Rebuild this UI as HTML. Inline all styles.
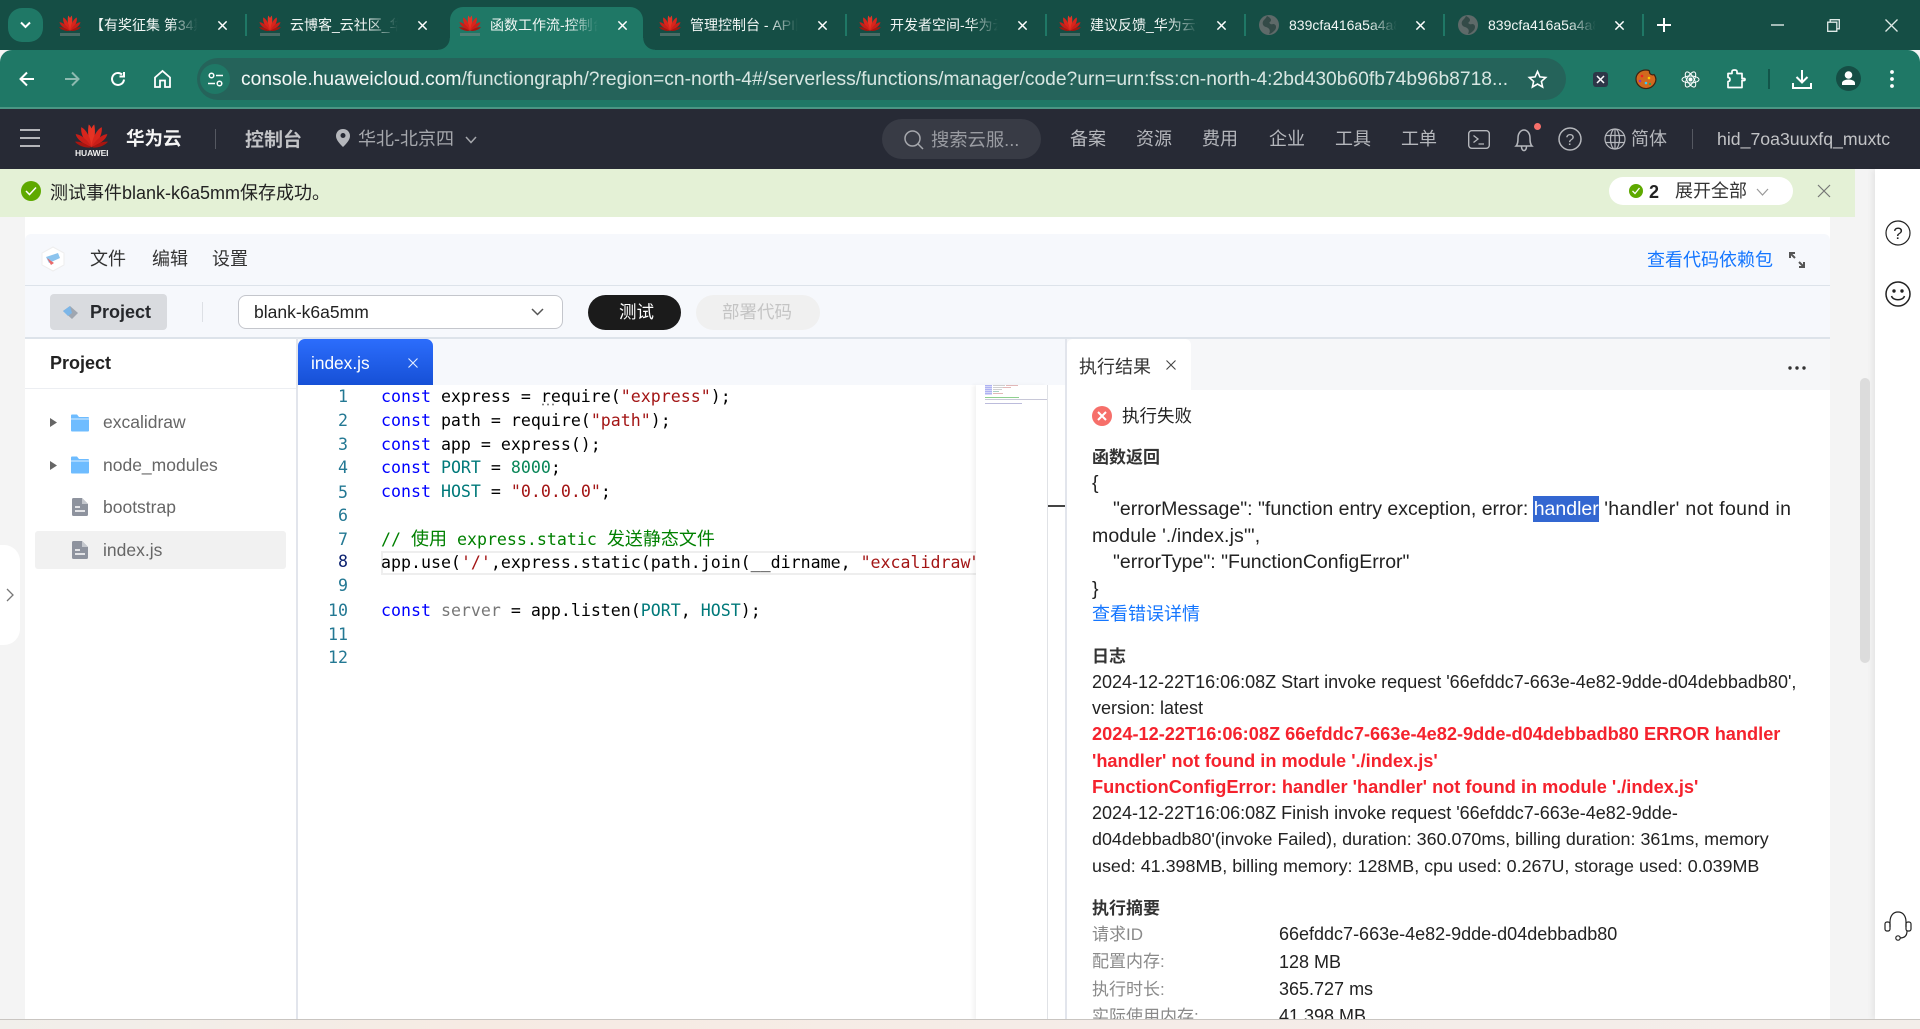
<!DOCTYPE html>
<html lang="zh"><head><meta charset="utf-8"><title>函数工作流-控制台</title>
<style>
html,body{margin:0;padding:0;width:1920px;height:1029px;overflow:hidden;background:#f4f4f4;font-family:"Liberation Sans","Noto Sans CJK SC",sans-serif;color:#222}
.b{position:absolute}
.t{position:absolute;white-space:nowrap;line-height:0;height:0}
svg{position:absolute;overflow:visible}
.tab{position:absolute;top:15px;height:20px;line-height:20px;font-size:14px;color:#f2f7f5;white-space:nowrap;overflow:hidden;width:110px;-webkit-mask-image:linear-gradient(90deg,#000 72%,transparent 98%);mask-image:linear-gradient(90deg,#000 72%,transparent 98%)}
.sep{position:absolute;top:14px;width:2px;height:22px;background:#1f7866}
.nav{font-size:18px;color:#b5b7bc}
.code{font-family:"DejaVu Sans Mono","Noto Sans CJK SC",monospace;font-size:16.6px;color:#000}
.ln{font-family:"DejaVu Sans Mono",monospace;font-size:16.6px;color:#237893;width:60px;text-align:right;left:288px}
.k{color:#00f}.s{color:#a31515}.n{color:#098658}.u{color:#777}
.r{font-size:18px;color:#222;left:1092px}
.j{font-size:19.5px;color:#222;left:1092px}
.h{font-size:17px;font-weight:bold;color:#333;left:1092px}
.e{font-size:18.2px;color:#f5222d;font-weight:bold;left:1092px}
.l{font-size:17px;color:#8a8a8a;left:1092px}
.w{font-size:18px;color:#222;left:1279px}
.f{font-size:17.5px;color:#666;left:103px}
</style></head><body>
<svg width="0" height="0" style="position:absolute"><defs>
<symbol id="hw" viewBox="0 0 48 36">
<g>
<path d="M24 35C19 26 18 11 20 2C26 6 29 24 24 35Z" fill="#e63324"/>
<path d="M24 35C19 26 18 11 20 2C26 6 29 24 24 35Z" transform="scale(-1 1) translate(-48 0)" fill="#e63324"/>
<path d="M24 35C15 28 8 18 9 6C16 8 24 24 24 35Z" fill="#d8251c"/>
<path d="M24 35C33 28 40 18 39 6C32 8 24 24 24 35Z" fill="#d8251c"/>
<path d="M24 35C14 31 3 25 1 16C9 16 20 27 24 35Z" fill="#c81e18"/>
<path d="M24 35C34 31 45 25 47 16C39 16 28 27 24 35Z" fill="#c81e18"/>
<path d="M23 35.5C14 36 5 33 0 27C8 26 18 31 23 35.5Z" fill="#a81510"/>
<path d="M25 35.5C34 36 43 33 48 27C40 26 30 31 25 35.5Z" fill="#a81510"/>
</g></symbol>
<symbol id="gl" viewBox="0 0 20 20"><circle cx="10" cy="10" r="10" fill="#5e6a69"/><path d="M8 1C12 3 13 5 11 7C9 8 12 10 14 9C17 9 18 12 16 15C14 17 12 19 10 19C12 15 10 13 7 12C3 11 3 7 5 5C6 4 7 3 8 1Z" fill="#334a47"/></symbol>
<symbol id="xx" viewBox="0 0 12 12"><path d="M1.500 1.500L10.500 10.500M10.500 1.500L1.500 10.500" fill="none" stroke="currentColor" stroke-width="1.600"/></symbol>
<symbol id="fo" viewBox="0 0 18 18"><path d="M0 1.500Q0 .5 1 .5H6L8 3H17Q18 3 18 4V16.500Q18 17.500 17 17.500H1Q0 17.500 0 16.500Z" fill="#6ebcff"/><path d="M0 5H18" stroke="#fff" stroke-width=".7"/></symbol>
<symbol id="fi" viewBox="0 0 16 18"><path d="M1.500 0H10L16 6V16.500Q16 18 14.500 18H1.500Q0 18 0 16.500V1.500Q0 0 1.500 0Z" fill="#8e939e"/><path d="M3 9H8M3 13H13" stroke="#fff" stroke-width="1.600"/><path d="M10 0V6H16" fill="#c5c8ce"/></symbol>
</defs></svg>

<!-- tab strip -->
<div class="b" style="left:0;top:0;width:1920px;height:50px;background:#154e45"></div>
<div class="b" style="left:8px;top:8px;width:35px;height:34px;background:#1f7866;border-radius:14px"></div>
<svg style="left:20px;top:21px" width="11" height="8"><path d="M1 1.500L5.500 6L10 1.500" fill="none" stroke="#fff" stroke-width="2"/></svg>
<div class="b" style="left:450px;top:7px;width:193px;height:43px;background:#1f7866;border-radius:13px 13px 0 0"></div>
<div class="b" style="left:438px;top:38px;width:12px;height:12px;background:radial-gradient(circle at 0 0,#154e45 11.5px,#1f7866 12px)"></div>
<div class="b" style="left:643px;top:38px;width:12px;height:12px;background:radial-gradient(circle at 100% 0,#154e45 11.5px,#1f7866 12px)"></div>

<svg style="left:59px;top:14px" width="22" height="18"><use href="#hw" width="22" height="18"/></svg>
<svg style="left:259px;top:14px" width="22" height="18"><use href="#hw" width="22" height="18"/></svg>
<svg style="left:459px;top:14px" width="22" height="18"><use href="#hw" width="22" height="18"/></svg>
<svg style="left:659px;top:14px" width="22" height="18"><use href="#hw" width="22" height="18"/></svg>
<svg style="left:859px;top:14px" width="22" height="18"><use href="#hw" width="22" height="18"/></svg>
<svg style="left:1059px;top:14px" width="22" height="18"><use href="#hw" width="22" height="18"/></svg>
<svg style="left:1259px;top:15px" width="20" height="20"><use href="#gl" width="20" height="20"/></svg>
<svg style="left:1458px;top:15px" width="20" height="20"><use href="#gl" width="20" height="20"/></svg>
<div class="b" style="left:60px;top:33px;width:20px;height:3px;background:#7d8a88;opacity:.5"></div>
<div class="b" style="left:260px;top:33px;width:20px;height:3px;background:#7d8a88;opacity:.5"></div>
<div class="b" style="left:460px;top:33px;width:20px;height:3px;background:#7d8a88;opacity:.5"></div>
<div class="b" style="left:660px;top:33px;width:20px;height:3px;background:#7d8a88;opacity:.5"></div>
<div class="b" style="left:860px;top:33px;width:20px;height:3px;background:#7d8a88;opacity:.5"></div>
<div class="b" style="left:1060px;top:33px;width:20px;height:3px;background:#7d8a88;opacity:.5"></div>

<div class="tab" style="left:90px">【有奖征集 第34期】</div>
<div class="tab" style="left:290px">云博客_云社区_华为云</div>
<div class="tab" style="left:490px">函数工作流-控制台</div>
<div class="tab" style="left:690px">管理控制台 - API网关</div>
<div class="tab" style="left:890px">开发者空间-华为云开发</div>
<div class="tab" style="left:1090px">建议反馈_华为云论坛</div>
<div class="tab" style="left:1289px">839cfa416a5a4a8fb7</div>
<div class="tab" style="left:1488px">839cfa416a5a4a8fb7</div>

<svg style="left:217px;top:20px;color:#fff" width="11" height="11"><use href="#xx" width="11" height="11"/></svg>
<svg style="left:417px;top:20px;color:#fff" width="11" height="11"><use href="#xx" width="11" height="11"/></svg>
<svg style="left:617px;top:20px;color:#fff" width="11" height="11"><use href="#xx" width="11" height="11"/></svg>
<svg style="left:817px;top:20px;color:#fff" width="11" height="11"><use href="#xx" width="11" height="11"/></svg>
<svg style="left:1017px;top:20px;color:#fff" width="11" height="11"><use href="#xx" width="11" height="11"/></svg>
<svg style="left:1216px;top:20px;color:#fff" width="11" height="11"><use href="#xx" width="11" height="11"/></svg>
<svg style="left:1415px;top:20px;color:#fff" width="11" height="11"><use href="#xx" width="11" height="11"/></svg>
<svg style="left:1614px;top:20px;color:#fff" width="11" height="11"><use href="#xx" width="11" height="11"/></svg>

<div class="sep" style="left:245px"></div><div class="sep" style="left:845px"></div><div class="sep" style="left:1045px"></div><div class="sep" style="left:1244px"></div><div class="sep" style="left:1443px"></div><div class="sep" style="left:1642px"></div>
<svg style="left:1657px;top:18px" width="14" height="14"><path d="M7 0V14M0 7H14" stroke="#fff" stroke-width="2"/></svg>
<svg style="left:1771px;top:24px" width="13" height="2"><path d="M0 1H13" stroke="#dfeae7" stroke-width="1.400"/></svg>
<svg style="left:1827px;top:19px" width="13" height="13"><path d="M.7 3.200H9.800V12.300H.7ZM3.200 3V.7H12.300V9.800H10" fill="none" stroke="#dfeae7" stroke-width="1.300"/></svg>
<svg style="left:1885px;top:19px" width="13" height="13"><path d="M.5.5L12.500 12.500M12.500.5L.5 12.500" stroke="#dfeae7" stroke-width="1.300"/></svg>

<!-- toolbar -->
<div class="b" style="left:0;top:50px;width:1920px;height:58px;background:#1f7866;border-radius:12px 12px 0 0"></div>
<div class="b" style="left:0;top:107px;width:1920px;height:2px;background:#4a9684"></div>
<svg style="left:19px;top:71px" width="16" height="16"><path d="M15 8H2M8 1.500L1.500 8L8 14.500" fill="none" stroke="#fff" stroke-width="2"/></svg>
<svg style="left:64px;top:71px" width="16" height="16"><path d="M1 8H14M8 1.500L14.500 8L8 14.500" fill="none" stroke="#8dbab0" stroke-width="2"/></svg>
<svg style="left:110px;top:71px" width="16" height="16"><path d="M14 8.500A6 6 0 1 1 12 3.500M14 1V5.500H9.500" fill="none" stroke="#fff" stroke-width="2"/></svg>
<svg style="left:154px;top:70px" width="17" height="18"><path d="M1 7.500L8.500 1L16 7.500V17H11V10.500H6V17H1Z" fill="none" stroke="#fff" stroke-width="1.800"/></svg>
<div class="b" style="left:197px;top:58px;width:1369px;height:42px;background:#25635a;border-radius:21px"></div>
<div class="b" style="left:200px;top:64px;width:30px;height:30px;background:#1f7866;border-radius:15px"></div>
<svg style="left:208px;top:72px" width="15" height="15"><circle cx="3.500" cy="3.500" r="2.300" fill="none" stroke="#fff" stroke-width="1.500"/><path d="M8 3.500H15M0 11.500H7" stroke="#fff" stroke-width="1.500"/><circle cx="11.500" cy="11.500" r="2.300" fill="none" stroke="#fff" stroke-width="1.500"/></svg>
<div class="t" style="left:241px;top:80px;font-size:19.26px;color:#f4f8f7">console.huaweicloud.com<span style="color:#d8e6e2">/functiongraph/?region=cn-north-4#/serverless/functions/manager/code?urn=urn:fss:cn-north-4:2bd430b60fb74b96b8718...</span></div>
<svg style="left:1528px;top:70px" width="19" height="18"><path d="M9.500 1.500L11.900 6.900L17.700 7.500L13.400 11.400L14.600 17L9.500 14.100L4.400 17L5.600 11.400L1.300 7.500L7.100 6.900Z" fill="none" stroke="#fff" stroke-width="1.600"/></svg>
<div class="b" style="left:1593px;top:72px;width:15px;height:15px;background:#2d3748;border-radius:3px"></div>
<svg style="left:1596px;top:75px" width="9" height="9"><path d="M1 1L8 8M8 1L1 8" stroke="#fff" stroke-width="1.500"/></svg>
<svg style="left:1635px;top:69px" width="22" height="20"><path d="M11 1C13 1 14 1.500 14.500 2C14 5 17 6.500 19 5.500C21 8 21.500 11 20 14C18 18 14 20 10 19.500C5 19 1 15 1 10C1 5 5 1 11 1Z" fill="#d2691e" stroke="#3d2412" stroke-width="1.200"/><circle cx="7" cy="7" r="1.300" fill="#e22"/><circle cx="14" cy="9" r="1.300" fill="#fc0"/><circle cx="5" cy="12" r="1.300" fill="#83c"/><circle cx="11" cy="14" r="1.300" fill="#3cf"/><circle cx="15" cy="15" r="1.100" fill="#2a5"/></svg>
<div class="b" style="left:1681px;top:70px;width:19px;height:19px;background:#27705f"></div>
<svg style="left:1681px;top:70px" width="19" height="19" fill="none" stroke="#fff" stroke-width="1"><ellipse cx="9.500" cy="9.500" rx="8.500" ry="3.500"/><ellipse cx="9.500" cy="9.500" rx="8.500" ry="3.500" transform="rotate(60 9.500 9.500)"/><ellipse cx="9.500" cy="9.500" rx="8.500" ry="3.500" transform="rotate(120 9.500 9.500)"/><circle cx="9.500" cy="9.500" r="1.500" fill="#fff"/></svg>
<svg style="left:1726px;top:69px" width="20" height="20"><path d="M2 4.500H6V2.500Q6 1 8.500 1Q11 1 11 2.500V4.500H16V9.500H18Q19 9.500 19 10.500Q19 11.500 18 11.500H16V18.500H2V12.500Q4 12.500 4 10.500Q4 8.500 2 8.500Z" fill="none" stroke="#fff" stroke-width="1.700" stroke-linejoin="round"/></svg>
<div class="b" style="left:1768px;top:69px;width:2px;height:20px;background:#12554a"></div>
<svg style="left:1792px;top:70px" width="20" height="19"><path d="M10 0V12M4.500 7L10 12.500L15.500 7M1 13V18H19V13" fill="none" stroke="#fff" stroke-width="2"/></svg>
<div class="b" style="left:1836px;top:66px;width:25px;height:25px;background:#154e45;border-radius:50%"></div>
<svg style="left:1840px;top:71px" width="17" height="15" fill="#fff"><circle cx="8.500" cy="4" r="3.800"/><path d="M2 14V12C2 10 5 8.500 8.500 8.500C12 8.500 15 10 15 12V14Z"/></svg>
<svg style="left:1890px;top:70px" width="4" height="18" fill="#fff"><circle cx="2" cy="2" r="1.900"/><circle cx="2" cy="9" r="1.900"/><circle cx="2" cy="16" r="1.900"/></svg>

<!-- console header -->
<div class="b" style="left:0;top:109px;width:1920px;height:60px;background:#272a35"></div>
<svg style="left:20px;top:129px" width="20" height="18"><path d="M0 1H20M0 9H20M0 17H20" stroke="#c8c9cc" stroke-width="1.800"/></svg>
<svg style="left:75px;top:121px" width="33" height="29"><use href="#hw" width="33" height="29"/></svg>
<div class="t" style="left:75px;top:153px;font-size:8.5px;color:#f0f0f0;font-weight:bold;letter-spacing:-.1px">HUAWEI</div>
<div class="t" style="left:126px;top:139px;font-size:18.5px;font-weight:bold;color:#f5f5f5">华为云</div>
<div class="b" style="left:215px;top:129px;width:1px;height:20px;background:#555861"></div>
<div class="t" style="left:245px;top:141px;font-size:19px;font-weight:bold;color:#c2c3c6">控制台</div>
<svg style="left:336px;top:129px" width="14" height="18"><path d="M7 0C3 0 0 3 0 7C0 11 4 15 7 18C10 15 14 11 14 7C14 3 11 0 7 0Z" fill="#b5b7bc"/><circle cx="7" cy="6.500" r="2.500" fill="#272a35"/></svg>
<div class="t" style="left:358px;top:139px;font-size:18px;color:#a5a7ac">华北-北京四</div>
<svg style="left:465px;top:136px" width="12" height="8"><path d="M1 1L6 6.500L11 1" fill="none" stroke="#a5a7ac" stroke-width="1.500"/></svg>
<div class="b" style="left:882px;top:119px;width:159px;height:40px;background:#383b45;border-radius:20px"></div>
<svg style="left:904px;top:130px" width="20" height="20"><circle cx="8.500" cy="8.500" r="7.500" fill="none" stroke="#a5a7ac" stroke-width="1.500"/><path d="M14 14L19 19" stroke="#a5a7ac" stroke-width="1.500"/></svg>
<div class="t" style="left:931px;top:140px;font-size:18.3px;color:#9a9ca2">搜索云服...</div>
<div class="t nav" style="left:1070px;top:139px">备案</div>
<div class="t nav" style="left:1136px;top:139px">资源</div>
<div class="t nav" style="left:1202px;top:139px">费用</div>
<div class="t nav" style="left:1269px;top:139px">企业</div>
<div class="t nav" style="left:1335px;top:139px">工具</div>
<div class="t nav" style="left:1401px;top:139px">工单</div>
<svg style="left:1468px;top:130px" width="22" height="19"><rect x=".7" y=".7" width="20.600" height="17.600" rx="3" fill="none" stroke="#b5b7bc" stroke-width="1.400"/><path d="M5.500 5.500L10 9L5.500 12.500M10.500 14H16" fill="none" stroke="#b5b7bc" stroke-width="1.300"/></svg>
<svg style="left:1514px;top:128px" width="20" height="24"><path d="M2 18C4 16 4 13 4 10C4 5 7 2 10 2C13 2 16 5 16 10C16 13 16 16 18 18ZM7.500 18.500C7.500 24 12.500 24 12.500 18.500" fill="none" stroke="#b5b7bc" stroke-width="1.500"/></svg>
<div class="b" style="left:1534px;top:123px;width:7px;height:7px;background:#f66f6a;border-radius:50%"></div>
<svg style="left:1558px;top:127px" width="24" height="24"><circle cx="12" cy="12" r="11" fill="none" stroke="#b5b7bc" stroke-width="1.500"/><text x="12" y="18" text-anchor="middle" font-size="16" font-family="Liberation Sans" fill="#b5b7bc">?</text></svg>
<svg style="left:1604px;top:128px" width="22" height="22" fill="none" stroke="#b5b7bc" stroke-width="1.200"><circle cx="11" cy="11" r="10"/><ellipse cx="11" cy="11" rx="4.500" ry="10"/><path d="M1.500 7.500H20.500M1.500 14.500H20.500M11 1V21"/></svg>
<div class="t nav" style="left:1631px;top:139px">简体</div>
<div class="b" style="left:1692px;top:129px;width:1px;height:20px;background:#555861"></div>
<div class="t" style="left:1717px;top:139px;font-size:17.7px;color:#c2c3c6">hid_7oa3uuxfq_muxtc</div>

<!-- notification -->
<div class="b" style="left:0;top:169px;width:1855px;height:48px;background:#e4f1d6"></div>
<div class="b" style="left:21px;top:181px;width:20px;height:20px;background:#5ea900;border-radius:50%"></div>
<svg style="left:25px;top:186px" width="12" height="10"><path d="M1 5L4.500 8.500L11 1.500" fill="none" stroke="#fff" stroke-width="1.500"/></svg>
<div class="t" style="left:50px;top:193px;font-size:18px;color:#222">测试事件blank-k6a5mm保存成功。</div>
<div class="b" style="left:1609px;top:177px;width:184px;height:28px;background:#fff;border-radius:14px"></div>
<div class="b" style="left:1629px;top:184px;width:14px;height:14px;background:#5ea900;border-radius:50%"></div>
<svg style="left:1632px;top:187px" width="8" height="8"><path d="M.5 4L3 6.500L7.500 1" fill="none" stroke="#fff" stroke-width="1.300"/></svg>
<div class="t" style="left:1649px;top:192px;font-size:18px;font-weight:bold;color:#222">2</div>
<div class="t" style="left:1675px;top:191px;font-size:18px;color:#333">展开全部</div>
<svg style="left:1756px;top:188px" width="13" height="8"><path d="M1 1L6.500 7L12 1" fill="none" stroke="#999" stroke-width="1.200"/></svg>
<svg style="left:1817px;top:184px" width="14" height="14"><path d="M1 1L13 13M13 1L1 13" stroke="#777" stroke-width="1.200"/></svg>

<!-- right rail -->
<div class="b" style="left:1875px;top:169px;width:45px;height:851px;background:#fff;box-shadow:-3px 0 6px rgba(0,0,0,.06)"></div>
<svg style="left:1885px;top:220px" width="26" height="26"><circle cx="13" cy="13" r="12" fill="none" stroke="#222" stroke-width="1.200"/><text x="13" y="19" text-anchor="middle" font-size="17" font-family="Liberation Sans" fill="#222">?</text></svg>
<svg style="left:1885px;top:281px" width="26" height="26" fill="none" stroke="#222" stroke-width="1.500"><circle cx="13" cy="13" r="12"/><circle cx="9" cy="10" r="1.700" fill="#222" stroke="none"/><circle cx="17" cy="10" r="1.700" fill="#222" stroke="none"/><path d="M6.500 15C8 20 18 20 19.500 15"/></svg>
<svg style="left:1884px;top:911px" width="28" height="30" fill="none" stroke="#222" stroke-width="1.200"><path d="M6 16V11C6 5 9 1 14 1C19 1 22 5 22 11V16"/><rect x="1" y="11" width="5" height="9" rx="2"/><rect x="22" y="11" width="5" height="9" rx="2"/><path d="M23 20C23 25 20 27 16 27"/><circle cx="14" cy="27" r="2.200"/></svg>

<!-- editor shell -->
<div class="b" style="left:25px;top:217px;width:1805px;height:803px;background:#fff"></div>
<div class="b" style="left:25px;top:234px;width:1805px;height:104px;background:#f6f8fc;border-radius:6px 6px 0 0"></div>
<div class="b" style="left:25px;top:285px;width:1805px;height:1px;background:#dde3ea"></div>
<div class="b" style="left:25px;top:337px;width:1805px;height:2px;background:#dde3ea"></div>
<svg style="left:40px;top:246px" width="26" height="26"><path d="M13 1L24 7V19L13 25L2 19V7Z" fill="#fff" stroke="#eee"/><path d="M6 11L18 7L20 12L9 17Z" fill="#8cc4ee"/><path d="M7 12L14 17L11 19Z" fill="#ea6a6a"/></svg>
<div class="t" style="left:90px;top:259px;font-size:18px;color:#333">文件</div>
<div class="t" style="left:152px;top:259px;font-size:18px;color:#333">编辑</div>
<div class="t" style="left:212px;top:259px;font-size:18px;color:#333">设置</div>
<div class="t" style="left:1647px;top:260px;font-size:18px;color:#1476ff">查看代码依赖包</div>
<svg style="left:1789px;top:252px" width="16" height="16"><path d="M1 6V1H6M1 1L6 6M15 10V15H10M15 15L10 10" fill="none" stroke="#555" stroke-width="2"/></svg>
<div class="b" style="left:50px;top:294px;width:117px;height:36px;background:#d9dbdf;border-radius:4px"></div>
<svg style="left:62px;top:304px" width="17" height="16"><path d="M1 7L8 2L16 9L10 15Z" fill="#9fa6b0"/><path d="M1 7L8 2L10 9L6 12Z" fill="#7cb6e8"/></svg>
<div class="t" style="left:90px;top:312px;font-size:18px;font-weight:bold;color:#26282c">Project</div>
<div class="b" style="left:202px;top:302px;width:1px;height:20px;background:#dde0e5"></div>
<div class="b" style="left:238px;top:295px;width:323px;height:32px;background:#fff;border:1px solid #c4c6cc;border-radius:8px"></div>
<div class="t" style="left:254px;top:312px;font-size:17.5px;color:#222">blank-k6a5mm</div>
<svg style="left:531px;top:308px" width="13" height="8"><path d="M1 1L6.500 6.500L12 1" fill="none" stroke="#555" stroke-width="1.500"/></svg>
<div class="b" style="left:588px;top:295px;width:93px;height:35px;background:#1b1b1b;border-radius:18px"></div>
<div class="t" style="left:619px;top:312px;font-size:17.5px;color:#fff">测试</div>
<div class="b" style="left:696px;top:295px;width:124px;height:35px;background:#f0f0f0;border-radius:18px"></div>
<div class="t" style="left:722px;top:312px;font-size:17.5px;color:#c4c4c4">部署代码</div>

<!-- sidebar -->
<div class="t" style="left:50px;top:363px;font-size:18px;font-weight:bold;color:#222">Project</div>
<div class="b" style="left:25px;top:388px;width:271px;height:1px;background:#eceef2"></div>
<div class="b" style="left:296px;top:338px;width:2px;height:682px;background:#e2e5ec"></div>
<div class="b" style="left:35px;top:531px;width:251px;height:38px;background:#f1f1f1;border-radius:3px"></div>
<svg style="left:50px;top:418px" width="7" height="9"><path d="M0 0L7 4.500L0 9Z" fill="#666"/></svg>
<svg style="left:50px;top:461px" width="7" height="9"><path d="M0 0L7 4.500L0 9Z" fill="#666"/></svg>
<svg style="left:71px;top:414px" width="18" height="18"><use href="#fo" width="18" height="18"/></svg>
<svg style="left:71px;top:456px" width="18" height="18"><use href="#fo" width="18" height="18"/></svg>
<svg style="left:72px;top:498px" width="16" height="18"><use href="#fi" width="16" height="18"/></svg>
<svg style="left:72px;top:541px" width="16" height="18"><use href="#fi" width="16" height="18"/></svg>
<div class="t f" style="top:422px">excalidraw</div>
<div class="t f" style="top:465px">node_modules</div>
<div class="t f" style="top:507px">bootstrap</div>
<div class="t f" style="top:550px">index.js</div>

<!-- code tabs -->
<div class="b" style="left:298px;top:339px;width:768px;height:46px;background:#f6f8fc"></div>
<div class="b" style="left:298px;top:339px;width:135px;height:46px;background:linear-gradient(180deg,#2c6dfc,#1650d6);border-radius:7px 7px 0 0"></div>
<div class="t" style="left:311px;top:363px;font-size:17.3px;color:#fff">index.js</div>
<svg style="left:408px;top:358px" width="10" height="10"><path d="M.5.5L9.500 9.500M9.500.5L.5 9.500" stroke="#e6eeff" stroke-width="1.100"/></svg>

<!-- code -->
<div class="t ln" style="top:397px">1</div><div class="t ln" style="top:421px">2</div><div class="t ln" style="top:445px">3</div><div class="t ln" style="top:468px">4</div><div class="t ln" style="top:492.5px">5</div><div class="t ln" style="top:516px">6</div><div class="t ln" style="top:539.5px">7</div><div class="t ln" style="top:562px;color:#0b216f">8</div><div class="t ln" style="top:586px">9</div><div class="t ln" style="top:611px">10</div><div class="t ln" style="top:635px">11</div><div class="t ln" style="top:658px">12</div>
<div class="b" style="left:381px;top:551px;width:595px;height:24px;box-sizing:border-box;border:2px solid #eeeeee;border-right:0"></div>
<div class="t code" style="left:381px;top:397px"><span class="k">const</span> express = require(<span class="s">"express"</span>);</div>
<svg style="left:541px;top:403px" width="14" height="3" fill="#777"><circle cx="2" cy="1.500" r="1"/><circle cx="7" cy="1.500" r="1"/><circle cx="12" cy="1.500" r="1"/></svg>
<div class="t code" style="left:381px;top:421px"><span class="k">const</span> path = require(<span class="s">"path"</span>);</div>
<div class="t code" style="left:381px;top:445px"><span class="k">const</span> app = express();</div>
<div class="t code" style="left:381px;top:468px"><span class="k">const</span> <span style="color:#00797a">PORT</span> = <span class="n">8000</span>;</div>
<div class="t code" style="left:381px;top:491.5px"><span class="k">const</span> <span style="color:#00797a">HOST</span> = <span class="s">"0.0.0.0"</span>;</div>
<div class="t code" style="left:381px;top:539.5px;color:#008000">// <span style="font-size:18px">使用</span> express.static <span style="font-size:18px">发送静态文件</span></div>
<div class="b code" style="left:381px;top:551px;width:595px;height:24px;overflow:hidden;white-space:nowrap;line-height:24px">app.use(<span class="s">'/'</span>,express.static(path.join(__dirname, <span class="s">"excalidraw"</span>)));</div>
<div class="t code" style="left:381px;top:611px"><span class="k">const</span> <span class="u">server</span> = app.listen(<span style="color:#00797a">PORT</span>, <span style="color:#00797a">HOST</span>);</div>

<!-- minimap -->
<div class="b" style="left:976px;top:385px;width:71px;height:635px;background:#fff;box-shadow:-3px 0 4px rgba(0,0,0,.05)"></div>
<div class="b" style="left:985px;top:385px;width:7px;height:10px;background:repeating-linear-gradient(180deg,#aeb2f2 0 1.500px,#fff 1.500px 2px)"></div>
<div class="b" style="left:993px;top:385px;width:12px;height:1px;background:#cfcfcf"></div>
<div class="b" style="left:1006px;top:385px;width:12px;height:1px;background:#e2b8b8"></div>
<div class="b" style="left:993px;top:387px;width:10px;height:1px;background:#cfcfcf"></div>
<div class="b" style="left:1003px;top:387px;width:8px;height:1px;background:#e2b8b8"></div>
<div class="b" style="left:993px;top:389px;width:9px;height:1px;background:#cfcfcf"></div>
<div class="b" style="left:993px;top:391px;width:6px;height:1px;background:#a8d0c4"></div>
<div class="b" style="left:993px;top:393px;width:10px;height:1px;background:#e2b8b8"></div>
<div class="b" style="left:985px;top:397px;width:34px;height:1px;background:#8fd08f"></div>
<div class="b" style="left:985px;top:399px;width:62px;height:1px;background:#c8c8d8"></div>
<div class="b" style="left:985px;top:403px;width:37px;height:1px;background:#bcbcdc"></div>
<div class="b" style="left:1047px;top:385px;width:1px;height:635px;background:#e0e2e6"></div>
<div class="b" style="left:1048px;top:505px;width:17px;height:2px;background:#444"></div>
<div class="b" style="left:1065px;top:339px;width:2px;height:681px;background:#e2e5ec"></div>

<!-- result panel -->
<div class="b" style="left:1067px;top:339px;width:763px;height:51px;background:#f6f7f9"></div>
<div class="b" style="left:1067px;top:339px;width:124px;height:51px;background:#fff;border-radius:6px 6px 0 0"></div>
<div class="t" style="left:1079px;top:367px;font-size:18px;color:#333">执行结果</div>
<svg style="left:1166px;top:360px" width="10" height="10"><path d="M.5.5L9.500 9.500M9.500.5L.5 9.500" stroke="#444" stroke-width="1.100"/></svg>
<svg style="left:1788px;top:366px" width="18" height="4" fill="#333"><circle cx="2" cy="2" r="1.700"/><circle cx="9" cy="2" r="1.700"/><circle cx="16" cy="2" r="1.700"/></svg>
<div class="b" style="left:1092px;top:406px;width:20px;height:20px;background:#f66f6a;border-radius:50%"></div>
<svg style="left:1097px;top:411px" width="10" height="10"><path d="M1 1L9 9M9 1L1 9" stroke="#fff" stroke-width="2"/></svg>
<div class="t" style="left:1122px;top:416px;font-size:17.5px;color:#222">执行失败</div>
<div class="t h" style="top:458px">函数返回</div>
<div class="t j" style="top:483px">{</div>
<div class="b" style="left:1533px;top:496px;width:66px;height:26px;background:#3367d1"></div>
<div class="t j" style="left:1113px;top:509px">"errorMessage": "function entry exception, error: <span style="color:#fff">handler</span> <span style="letter-spacing:.33px">'handler' not found in</span></div>
<div class="t j" style="top:536px;letter-spacing:.1px">module './index.js'",</div>
<div class="t j" style="left:1113px;top:562px">"errorType": "FunctionConfigError"</div>
<div class="t j" style="top:589px">}</div>
<div class="t" style="left:1092px;top:614px;font-size:18px;color:#1476ff">查看错误详情</div>
<div class="t h" style="top:657px">日志</div>
<div class="t r" style="top:682px">2024-12-22T16:06:08Z Start invoke request '66efddc7-663e-4e82-9dde-d04debbadb80',</div>
<div class="t r" style="top:708px">version: latest</div>
<div class="t e" style="top:734px">2024-12-22T16:06:08Z 66efddc7-663e-4e82-9dde-d04debbadb80 ERROR handler</div>
<div class="t e" style="top:761px">'handler' not found in module './index.js'</div>
<div class="t e" style="top:787px">FunctionConfigError: handler 'handler' not found in module './index.js'</div>
<div class="t r" style="top:813px">2024-12-22T16:06:08Z Finish invoke request '66efddc7-663e-4e82-9dde-</div>
<div class="t r" style="top:839px;font-size:17.9px">d04debbadb80'(invoke Failed), duration: 360.070ms, billing duration: 361ms, memory</div>
<div class="t r" style="top:866px;font-size:17.9px">used: 41.398MB, billing memory: 128MB, cpu used: 0.267U, storage used: 0.039MB</div>
<div class="t h" style="top:908.5px">执行摘要</div>
<div class="t l" style="top:935px">请求ID</div><div class="t w" style="top:934px">66efddc7-663e-4e82-9dde-d04debbadb80</div>
<div class="t l" style="top:962px">配置内存:</div><div class="t w" style="top:962px">128 MB</div>
<div class="t l" style="top:990px">执行时长:</div><div class="t w" style="top:989px">365.727 ms</div>
<div class="t l" style="top:1017px">实际使用内存:</div><div class="t w" style="top:1016px">41.398 MB</div>

<!-- page scrollbar, left handle -->
<div class="b" style="left:1860px;top:378px;width:10px;height:285px;background:#dcdcdc;border-radius:5px"></div>
<div class="b" style="left:0;top:545px;width:20px;height:100px;background:#fff;border-radius:0 16px 16px 0"></div>
<svg style="left:6px;top:588px" width="8" height="14"><path d="M1 1L7 7L1 13" fill="none" stroke="#777" stroke-width="1.300"/></svg>

<!-- bottom strip -->
<div class="b" style="left:0;top:1019px;width:1920px;height:10px;background:linear-gradient(90deg,#f1efeb,#f6ebe3 25%,#f5ece8 60%,#f3eeea);border-top:1px solid #c9c5c1;box-sizing:border-box"></div>
</body></html>
